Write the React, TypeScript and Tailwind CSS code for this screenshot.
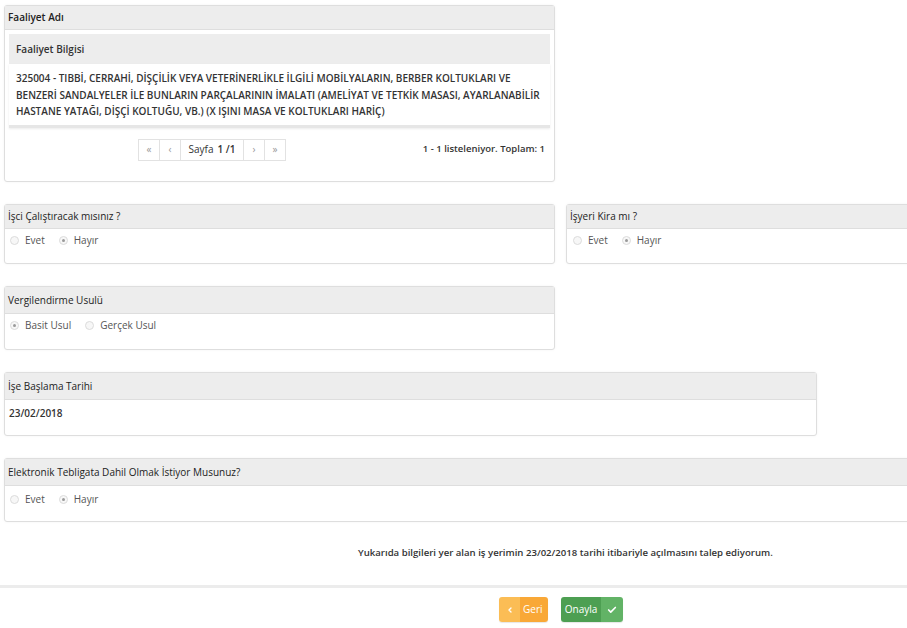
import { Check, ChevronLeft } from 'lucide-react';

const font = { fontFamily: '"Open Sans", "Noto Sans", sans-serif' };

function Radio({ checked }: { checked?: boolean }) {
  return (
    <span className="inline-flex h-[9px] w-[9px] items-center justify-center rounded-full border border-[#dcdcdc] bg-[#f7f7f7]">
      {checked && <span className="h-[3px] w-[3px] rounded-full bg-[#9a9a9a]" />}
    </span>
  );
}

function RadioGroup({ options, selected }: { options: string[]; selected: number }) {
  return (
    <div className="flex items-center gap-[14px] text-[10px] text-[#555]">
      {options.map((o, i) => (
        <label key={o} className="flex items-center gap-[6px]">
          <Radio checked={i === selected} />
          <span>{o}</span>
        </label>
      ))}
    </div>
  );
}

function Panel({
  title,
  className,
  headerClass,
  children,
}: {
  title: string;
  className: string;
  headerClass: string;
  children: React.ReactNode;
}) {
  return (
    <div className={`shrink-0 rounded-[3px] border border-[#dedede] bg-white shadow-[0_0_3px_rgba(0,0,0,0.05)] ${className}`}>
      <div className={`flex items-center border-b border-[#dedede] bg-[#ededed] px-[3px] text-[10px] text-[#222] ${headerClass}`}>
        {title}
      </div>
      {children}
    </div>
  );
}

export default function App() {
  return (
    <div className="min-h-[628px] w-[907px] overflow-hidden bg-white text-[#333]" style={font}>
      <div className="pl-[4px] pt-[5px]">
        {/* Faaliyet Adı */}
        <Panel title="Faaliyet Adı" className="h-[177px] w-[551px]" headerClass="h-[24px] font-semibold">
          <div className="px-[4px] pt-[4px]">
            <div className="flex h-[30px] items-center bg-[#ededed] px-[7px] text-[10px] font-semibold">
              Faaliyet Bilgisi
            </div>
            <div className="border-b-[3px] border-[#e6e6e6] px-[7px] pb-[5px] pt-[6px] text-[10px] font-semibold leading-[16.5px] text-[#333] shadow-[0_1px_2px_rgba(0,0,0,0.08)]">
              325004 - TIBBİ, CERRAHİ, DİŞÇİLİK VEYA VETERİNERLİKLE İLGİLİ MOBİLYALARIN, BERBER KOLTUKLARI VE BENZERİ SANDALYELER İLE BUNLARIN PARÇALARININ İMALATI (AMELİYAT VE TETKİK MASASI, AYARLANABİLİR HASTANE YATAĞI, DİŞÇİ KOLTUĞU, VB.) (X IŞINI MASA VE KOLTUKLARI HARİÇ)
            </div>
            <div className="relative mt-[11px] flex h-[22px] items-center">
              <div className="ml-[129px] flex h-[22px] items-stretch border border-[#e2e2e2] text-[10px]">
                <span className="flex w-[21px] items-center justify-center border-r border-[#e2e2e2] text-[#999]">«</span>
                <span className="flex w-[21px] items-center justify-center border-r border-[#e2e2e2] text-[#999]">‹</span>
                <span className="flex w-[63px] items-center justify-center gap-[4px] border-r border-[#e2e2e2] text-[#333]">
                  Sayfa <span className="font-semibold">1 /1</span>
                </span>
                <span className="flex w-[21px] items-center justify-center border-r border-[#e2e2e2] text-[#999]">›</span>
                <span className="flex w-[20px] items-center justify-center text-[#999]">»</span>
              </div>
              <span className="ml-auto mr-[5px] text-[9.5px] font-semibold">1 - 1 listeleniyor. Toplam: 1</span>
            </div>
          </div>
        </Panel>

        {/* İşci / İşyeri */}
        <div className="mt-[22px] flex gap-[11px]">
          <Panel title="İşci Çalıştıracak mısınız ?" className="h-[60px] w-[551px]" headerClass="h-[24px]">
            <div className="px-[5px] pt-[4px]">
              <RadioGroup options={['Evet', 'Hayır']} selected={1} />
            </div>
          </Panel>
          <Panel title="İşyeri Kira mı ?" className="h-[60px] w-[350px]" headerClass="h-[24px]">
            <div className="px-[6px] pt-[4px]">
              <RadioGroup options={['Evet', 'Hayır']} selected={1} />
            </div>
          </Panel>
        </div>

        {/* Vergilendirme */}
        <Panel title="Vergilendirme Usulü" className="mt-[22px] h-[64px] w-[551px]" headerClass="h-[27px]">
          <div className="px-[5px] pt-[4px]">
            <RadioGroup options={['Basit Usul', 'Gerçek Usul']} selected={0} />
          </div>
        </Panel>

        {/* İşe Başlama Tarihi */}
        <Panel title="İşe Başlama Tarihi" className="mt-[22px] h-[64px] w-[813px]" headerClass="h-[27px]">
          <div className="px-[4px] pt-[6px] text-[10px] font-semibold">23/02/2018</div>
        </Panel>

        {/* Elektronik Tebligat */}
        <Panel title="Elektronik Tebligata Dahil Olmak İstiyor Musunuz?" className="mt-[22px] h-[64px] w-[910px]" headerClass="h-[27px]">
          <div className="px-[5px] pt-[6px]">
            <RadioGroup options={['Evet', 'Hayır']} selected={1} />
          </div>
        </Panel>
      </div>

      <div className="mt-[24px] pl-[358px] text-[9.6px] font-semibold text-[#333]">
        Yukarıda bilgileri yer alan iş yerimin 23/02/2018 tarihi itibariyle açılmasını talep ediyorum.
      </div>

      <div className="mt-[25px] h-[3px] w-full bg-[#ececec]" />

      <div className="mt-[9px] flex gap-[13px] pl-[499px]">
        <button className="flex h-[25px] w-[49px] items-stretch overflow-hidden rounded-[3px] text-[10px] text-white shadow-[0_1px_1px_rgba(0,0,0,0.1)]">
          <span className="flex w-[21px] items-center justify-center bg-[#fbbd55]">
            <ChevronLeft className="h-[8px] w-[8px]" strokeWidth={4} />
          </span>
          <span className="flex flex-1 items-center bg-[#f9a837] pl-[3px]">Geri</span>
        </button>
        <button className="flex h-[25px] w-[62px] items-stretch overflow-hidden rounded-[3px] text-[10px] text-white shadow-[0_1px_1px_rgba(0,0,0,0.1)]">
          <span className="flex flex-1 items-center justify-center bg-[#4d9f52]">Onayla</span>
          <span className="flex w-[22px] items-center justify-center bg-[#62b366]">
            <Check className="h-[10px] w-[10px]" strokeWidth={4} />
          </span>
        </button>
      </div>
    </div>
  );
}
